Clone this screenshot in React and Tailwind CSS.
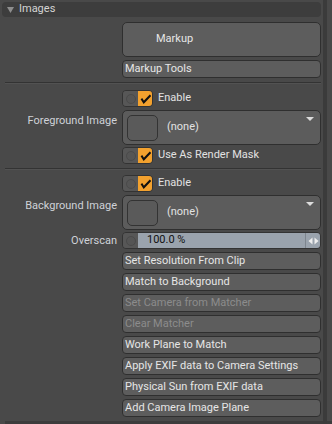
const font = "font-['Roboto','Liberation_Sans',Arial,sans-serif]"

function Check() {
  return (
    <svg width="11" height="10" viewBox="0 0 11 10">
      <path d="M2 5.5 L3.8 8.3 L9.8 2" fill="none" stroke="#111" strokeWidth="2" strokeLinecap="square" />
    </svg>
  )
}

function Toggle({ label }) {
  return (
    <div className="flex items-center h-[17px]">
      <div className="flex h-[17px] w-[31px] rounded-[4px] border border-[#333] overflow-hidden">
        <div className="w-[15px] bg-[#575757] flex items-center justify-center">
          <div className="w-[10px] h-[10px] rounded-full border border-[#4b4b4b] bg-[#555]" />
        </div>
        <div className="flex-1 bg-[#f2a12e] flex items-center justify-center">
          <Check />
        </div>
      </div>
      <span className="ml-[5px] text-[11px] text-[#e2e2e2]">{label}</span>
    </div>
  )
}

function Btn({ children, disabled }) {
  return (
    <div
      className={
        'h-[18px] rounded-[4px] border border-[#2f2f2f] bg-[#5d5d5d] flex items-center px-[2px] text-[11px] ' +
        (disabled ? 'text-[#8c8c8c]' : 'text-[#e6e6e6]')
      }
    >
      {children}
    </div>
  )
}

function Row({ label, labelClass = '', className = '', children }) {
  return (
    <div className={'flex ' + className}>
      <div className={'w-[122px] shrink-0 pr-[5px] text-right text-[11px] text-[#cfd2d8] ' + labelClass}>{label}</div>
      <div className="w-[199px] shrink-0">{children}</div>
    </div>
  )
}

function ImageWell() {
  return (
    <div className="relative h-[35px] rounded-[5px] border border-[#2f2f2f] bg-[#5c5c5c] flex items-center pl-[4px]">
      <div className="w-[31px] h-[26px] rounded-[5px] border border-[#333] bg-[#5a5a5a]" />
      <span className="ml-[9px] text-[11px] text-[#e2e2e2]">(none)</span>
      <div className="absolute right-[6px] top-[6px] w-0 h-0 border-l-[4px] border-r-[4px] border-t-[4px] border-l-transparent border-r-transparent border-t-[#dcdcdc]" />
    </div>
  )
}

function Separator({ className = '' }) {
  return <div className={'ml-[5px] w-[316px] h-[2px] border-t border-[#333] border-b border-b-[#525252] ' + className} />
}

export default function App() {
  return (
    <div className={'w-[332px] h-[424px] bg-[#494949] flex overflow-hidden ' + font}>
      <div className="w-[323px] flex flex-col">
        <div className="mt-[2px] ml-[2px] w-[319px] h-[15px] rounded-[4px] bg-[#3d3d3d] flex items-center text-[11px] text-[#d4d4d4]">
          <svg width="9" height="8" viewBox="0 0 9 8" className="ml-[4px] mr-[4px]">
            <path d="M1 1 L8 1 L4.5 7 Z" fill="#8e8e8e" />
          </svg>
          Images
        </div>

        <Row label="" className="mt-[5px]">
          <div className="h-[35px] rounded-[5px] border border-[#2f2f2f] bg-[#5d5d5d] flex items-center pl-[33px] text-[11px] text-[#e6e6e6]">
            Markup
          </div>
          <div className="mt-[3px]">
            <Btn>Markup Tools</Btn>
          </div>
        </Row>

        <Separator className="mt-[4px]" />

        <Row label="" className="mt-[6px]">
          <Toggle label="Enable" />
        </Row>
        <Row label="Foreground Image" labelClass="pt-[3px]" className="mt-[3px]">
          <ImageWell />
        </Row>
        <Row label="" className="mt-[2px]">
          <Toggle label="Use As Render Mask" />
        </Row>

        <Separator className="mt-[4px]" />

        <Row label="" className="mt-[5px]">
          <Toggle label="Enable" />
        </Row>
        <Row label="Background Image" labelClass="pt-[3px]" className="mt-[3px]">
          <ImageWell />
        </Row>
        <Row label="Overscan" labelClass="leading-[17px]" className="mt-[2px]">
          <div className="flex h-[17px] rounded-[4px] border border-[#333] overflow-hidden">
            <div className="w-[15px] bg-[#575757] flex items-center justify-center">
              <div className="w-[10px] h-[10px] rounded-full border border-[#4b4b4b] bg-[#555]" />
            </div>
            <div className="flex-1 bg-[#9aa3ad] flex items-center pl-[9px] text-[11px] text-[#111]">100.0 %</div>
            <div className="w-[15px] bg-[#9aa3ad] border-l border-[#7d858e] flex items-center justify-center">
              <svg width="11" height="8" viewBox="0 0 11 8">
                <path d="M0.5 4 L4.5 0.5 L4.5 7.5 Z" fill="#eeeeee" />
                <path d="M10.5 4 L6.5 0.5 L6.5 7.5 Z" fill="#eeeeee" />
              </svg>
            </div>
          </div>
        </Row>

        <Row label="" className="mt-[3px]">
          <div className="flex flex-col gap-[3px]">
            <Btn>Set Resolution From Clip</Btn>
            <Btn>Match to Background</Btn>
            <Btn disabled>Set Camera from Matcher</Btn>
            <Btn disabled>Clear Matcher</Btn>
            <Btn>Work Plane to Match</Btn>
            <Btn>Apply EXIF data to Camera Settings</Btn>
            <Btn>Physical Sun from EXIF data</Btn>
            <Btn>Add Camera Image Plane</Btn>
          </div>
        </Row>

        <div className="mt-auto ml-[5px] h-[3px] bg-[#3c3c3c]" />
      </div>
      <div className="w-[4px] bg-[#3b3b3b]" />
      <div className="flex-1 flex flex-col">
        <div className="mt-auto h-[3px] bg-[#3c3c3c]" />
      </div>
    </div>
  )
}
